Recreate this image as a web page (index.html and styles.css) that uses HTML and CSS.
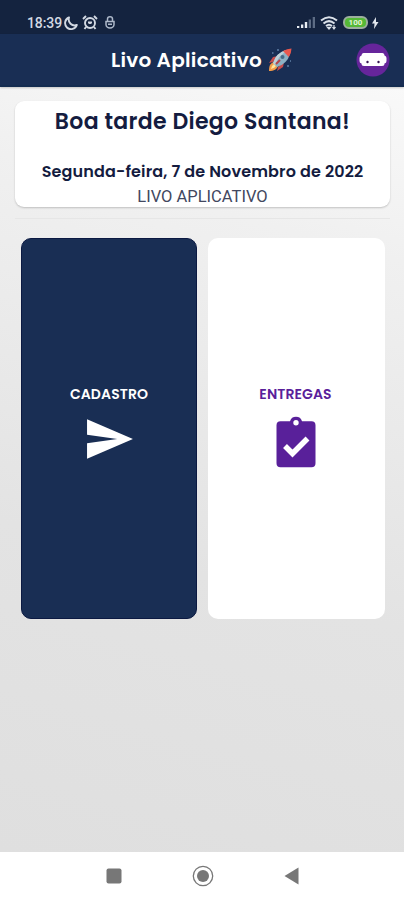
FILE: index.html
```
<!DOCTYPE html>
<html lang="pt-BR">
<head>
<meta charset="utf-8">
<title>Livo Aplicativo</title>
<link rel="stylesheet" href="styles.css">
</head>
<body>
<div class="status">
  <span class="clock">18:39</span>
  <svg class="moon" width="14" height="14" viewBox="0 0 14 14"><path d="M5 1.500A6 6 0 1 0 12.800 9 6 6 0 0 1 5 1.500Z" fill="none" stroke="#d3d9e3" stroke-width="1.900" stroke-linejoin="round"/></svg>
  <svg class="alarm" width="16" height="15" viewBox="0 0 16 15" fill="none" stroke="#d3d9e3" stroke-width="1.900"><circle cx="8" cy="8" r="5"/><path d="M1 4l3-3M15 4l-3-3M4 12l-1.500 2M12 12l1.500 2"/><path d="M6 7.500h4M8 7v2"/></svg>
  <svg class="lock" width="10" height="13" viewBox="0 0 10 13" fill="none" stroke="#aeb9ca" stroke-width="1.500"><path d="M2.500 5V3a2.500 2.200 0 0 1 5 0v2M1 5.500h8v3a4 3.500 0 0 1-8 0zM3 8.300h4"/></svg>
  <svg class="signal" width="20" height="13" viewBox="0 0 20 13"><path d="M1 10h2.300v2H1zM5 8.500h2.300V12H5zM8.800 6h2.400v6H8.800z" fill="#e9edf3"/><path d="M12.700 3.500H15V12h-2.300zM16.700 1H19v11h-2.300z" fill="#5d6c84"/></svg>
  <svg class="wifi" width="18" height="14" viewBox="0 0 18 14" fill="none" stroke="#dbe1e9" stroke-width="2"><path d="M1 4.500q8-6.500 16 0M3.500 7.400q5.500-4.600 11 0M6 10q3-2.500 6 0"/><path d="M7.500 11.300h3L9 13zM14 9v4M12.500 11l1.500 2 1.500-2" stroke-width="1.200"/></svg>
  <span class="battery">100</span>
  <svg class="bolt" width="7" height="12" viewBox="0 0 7 12"><path d="M4 0 0 6.500h2.500L2 12l4.500-7H4z" fill="#e2e7ee"/></svg>
</div>
<header class="topbar">
  <h1 class="title">Livo Aplicativo</h1>
  <svg class="rocket" width="24" height="24" viewBox="0 0 24 24">
    <path d="M5 14 1 15l4-6 5-1zM10 19l-1 4 6-4 1-5z" fill="#c84d4c"/>
    <path d="M6 14c-4 1-5 4-5 9 5 0 8-2 9-5z" fill="#f39a48"/><path d="M6 16q-3 2-3 5 4-1 5-3z" fill="#ffe59a"/>
    <path d="M5 15Q8 5 18 2l4 4Q19 16 9 19z" fill="#8db1c4"/><path d="M5 15Q8 5 18 2l1 1Q11 7 7 17z" fill="#bed1d9"/>
    <path d="M15 3Q19 .500 23.500.500q0 4.500-2.700 8.500z" fill="#e9584e"/>
    <circle cx="14.500" cy="9" r="2" fill="#456b88"/><path d="m8 16 4-4" stroke="#b84346" stroke-width="2"/>
    <path d="M10 1v2M4 5h1.500M20 17v2M22 13h1" stroke="#83a8cf"/>
  </svg>
  <svg class="avatar" width="34" height="34" viewBox="0 0 34 34"><circle cx="17" cy="17" r="16.500" fill="#66259b"/><path d="M7.500 10h19q2 0 2 2.500 2 .5 2 2.500v3q0 2-2 2.500 0 2.500-2.500 2.500H8q-2.500 0-2.500-2.500-2-.500-2-2.500v-3q0-2 2-2.500 0-2.500 2-2.500z" fill="#fff"/><circle cx="11.500" cy="19" r="1.200" fill="#351653"/><circle cx="22.500" cy="19" r="1.200" fill="#351653"/></svg>
</header>
<main class="content">
  <section class="welcome">
    <h2 class="greeting">Boa tarde Diego Santana!</h2>
    <p class="date">Segunda-feira, 7 de Novembro de 2022</p>
    <p class="company">LIVO APLICATIVO</p>
  </section>
  <hr class="divider">
  <div class="tiles">
    <a class="tile tile-dark"><span class="label">CADASTRO</span>
      <svg class="tile-icon icon-send" width="58" height="58" viewBox="0 0 24 24"><path d="M2.500 20.200 21.500 12 2.500 3.800v6.400L15 12l-12.500 1.800z" fill="#fff"/></svg>
    </a>
    <a class="tile tile-light"><span class="label">ENTREGAS</span>
      <svg class="tile-icon" width="58" height="58" viewBox="0 0 58 58"><path fill-rule="evenodd" d="M13.500 11.200H23a6.300 6.300 0 0 1 12 0h9.500q4 0 4 4v38q0 4-4 4h-31q-4 0-4-4v-38q0-4 4-4zM29 10a2.700 2.700 0 1 0 0 5.400 2.700 2.700 0 0 0 0-5.400z" fill="#59209a"/><path d="m18 36 7.500 7.500L40.500 28.500" fill="none" stroke="#fff" stroke-width="5.500"/></svg>
    </a>
  </div>
</main>
<nav class="navbar">
  <svg width="16" height="16" viewBox="0 0 16 16"><rect x=".5" y=".5" width="15" height="15" rx="2" fill="#777"/></svg>
  <svg width="22" height="22" viewBox="0 0 22 22"><circle cx="11" cy="11" r="9.700" fill="none" stroke="#777" stroke-width="1.300"/><circle cx="11" cy="11" r="6" fill="#777"/></svg>
  <svg width="15" height="18" viewBox="0 0 15 18"><path d="M14.500.500v17L.500 9z" fill="#777"/></svg>
</nav>
</body>
</html>
```
FILE: styles.css
```
* { box-sizing: border-box; }
body { margin: 0; width: 404px; height: 900px; overflow: hidden; display: flex; flex-direction: column; font-family: Poppins, Inter, sans-serif; color: #141c40; }
h1, h2, p { margin: 0; white-space: nowrap; }
svg { display: block; flex: none; }
.status { height: 34px; flex: none; background: #14233f; display: flex; align-items: center; padding: 11px 25px 0 27px; }
.clock { width: 36px; font: 500 14px/16px Roboto, sans-serif; color: #d3d9e3; letter-spacing: -.1px; }
.moon { margin-left: 1px; }
.alarm { margin-left: 4px; }
.lock { margin-left: 7px; }
.signal { margin-left: auto; }
.wifi { margin-left: 4px; }
.battery { margin-left: 5px; width: 25px; height: 13px; border: 2px solid #9caf9e; border-radius: 6px; background: #55b936; color: #e2f6d8; font: 700 8px/9px Roboto, sans-serif; text-align: center; }
.bolt { margin-left: 4px; }
.topbar { height: 53px; flex: none; background: #192e54; border-bottom: 2px solid #142c50; display: flex; align-items: center; padding: 0 13px 0 111px; box-shadow: 0 1px 2px #0003; z-index: 1; }
.title { width: 151px; font-size: 20px; line-height: 30px; font-weight: 600; color: #fff; letter-spacing: .27px; }
.rocket { margin-left: 6px; }
.avatar { margin-left: auto; margin-right: 1px; }
.content { flex: 1; padding: 14px 14px 0 15px; background: linear-gradient(195deg, #f9f9f9 0%, #f0f0f0 20%, #e3e3e3 62%, #dfdfdf 100%); }
.welcome { height: 106px; border-radius: 9px; background: #fff; box-shadow: 0 1px 2px #0003; text-align: center; padding-top: 5px; }
.greeting { font-size: 22px; line-height: 32px; font-weight: 600; letter-spacing: .32px; }
.date { margin-top: 22px; font-size: 16px; line-height: 24px; font-weight: 600; letter-spacing: .14px; }
.company { font: 400 16.5px/25px Roboto, sans-serif; color: #42485f; }
.divider { height: 1px; border: 0; margin: 11px 0 19px; background: #e6e6e6; }
.tiles { display: grid; grid-template-columns: 176px 177px; gap: 11px; padding-left: 6px; }
.tile { height: 381px; border-radius: 10px; display: flex; flex-direction: column; align-items: center; padding-top: 146px; }
.tile-dark { background: #192e54; border: 1px solid #0b1942; padding-top: 145px; color: #fff; }
.tile-light { background: #fff; color: #59209a; padding-right: 2px; }
.label { font-size: 14px; line-height: 21px; font-weight: 600; white-space: nowrap; letter-spacing: .1px; }
.tile-icon { margin-top: 5px; }
.icon-send { margin-left: 2px; }
.navbar { height: 48px; flex: none; background: #fff; display: flex; align-items: center; justify-content: space-between; padding: 0 105px 0 106px; }
```
